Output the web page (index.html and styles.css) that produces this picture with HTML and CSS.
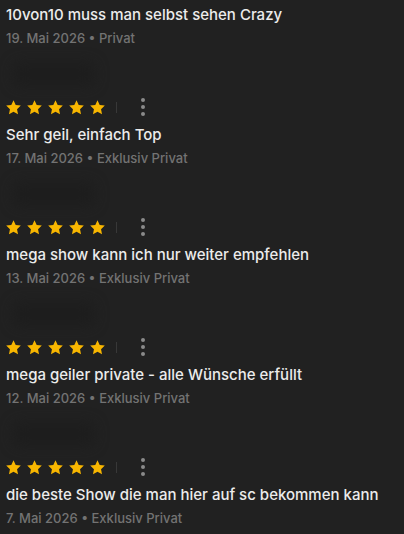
FILE: index.html
```html
<!DOCTYPE html>
<html lang="de">
<head>
    <title>Bewertungen</title>
    <link rel="stylesheet" href="styles.css">
</head>
<body>
    <div class="reviews">
        <!-- first review is scrolled past its header -->
        <div class="review first">
            <div class="review-text">10von10 muss man selbst sehen Crazy</div>
            <div class="review-meta">19. Mai 2026 • Privat</div>
        </div>

        <div class="review">
            <div class="reviewer"></div>
            <div class="rating-row">
                <div class="stars">
                    <svg viewBox="0 0 24 24"><path d="M12 1.8l3.1 6.6 7.2.9-5.3 5 1.4 7.1L12 17.9l-6.4 3.5 1.4-7.1-5.3-5 7.2-.9z"/></svg>
                    <svg viewBox="0 0 24 24"><path d="M12 1.8l3.1 6.6 7.2.9-5.3 5 1.4 7.1L12 17.9l-6.4 3.5 1.4-7.1-5.3-5 7.2-.9z"/></svg>
                    <svg viewBox="0 0 24 24"><path d="M12 1.8l3.1 6.6 7.2.9-5.3 5 1.4 7.1L12 17.9l-6.4 3.5 1.4-7.1-5.3-5 7.2-.9z"/></svg>
                    <svg viewBox="0 0 24 24"><path d="M12 1.8l3.1 6.6 7.2.9-5.3 5 1.4 7.1L12 17.9l-6.4 3.5 1.4-7.1-5.3-5 7.2-.9z"/></svg>
                    <svg viewBox="0 0 24 24"><path d="M12 1.8l3.1 6.6 7.2.9-5.3 5 1.4 7.1L12 17.9l-6.4 3.5 1.4-7.1-5.3-5 7.2-.9z"/></svg>
                </div>
                <span class="divider"></span>
                <button class="more" title="Mehr"><i></i><i></i><i></i></button>
            </div>
            <div class="review-text">Sehr geil, einfach Top</div>
            <div class="review-meta">17. Mai 2026 • Exklusiv Privat</div>
        </div>

        <div class="review">
            <div class="reviewer"></div>
            <div class="rating-row">
                <div class="stars">
                    <svg viewBox="0 0 24 24"><path d="M12 1.8l3.1 6.6 7.2.9-5.3 5 1.4 7.1L12 17.9l-6.4 3.5 1.4-7.1-5.3-5 7.2-.9z"/></svg>
                    <svg viewBox="0 0 24 24"><path d="M12 1.8l3.1 6.6 7.2.9-5.3 5 1.4 7.1L12 17.9l-6.4 3.5 1.4-7.1-5.3-5 7.2-.9z"/></svg>
                    <svg viewBox="0 0 24 24"><path d="M12 1.8l3.1 6.6 7.2.9-5.3 5 1.4 7.1L12 17.9l-6.4 3.5 1.4-7.1-5.3-5 7.2-.9z"/></svg>
                    <svg viewBox="0 0 24 24"><path d="M12 1.8l3.1 6.6 7.2.9-5.3 5 1.4 7.1L12 17.9l-6.4 3.5 1.4-7.1-5.3-5 7.2-.9z"/></svg>
                    <svg viewBox="0 0 24 24"><path d="M12 1.8l3.1 6.6 7.2.9-5.3 5 1.4 7.1L12 17.9l-6.4 3.5 1.4-7.1-5.3-5 7.2-.9z"/></svg>
                </div>
                <span class="divider"></span>
                <button class="more" title="Mehr"><i></i><i></i><i></i></button>
            </div>
            <div class="review-text">mega show kann ich nur weiter empfehlen</div>
            <div class="review-meta">13. Mai 2026 • Exklusiv Privat</div>
        </div>

        <div class="review">
            <div class="reviewer"></div>
            <div class="rating-row">
                <div class="stars">
                    <svg viewBox="0 0 24 24"><path d="M12 1.8l3.1 6.6 7.2.9-5.3 5 1.4 7.1L12 17.9l-6.4 3.5 1.4-7.1-5.3-5 7.2-.9z"/></svg>
                    <svg viewBox="0 0 24 24"><path d="M12 1.8l3.1 6.6 7.2.9-5.3 5 1.4 7.1L12 17.9l-6.4 3.5 1.4-7.1-5.3-5 7.2-.9z"/></svg>
                    <svg viewBox="0 0 24 24"><path d="M12 1.8l3.1 6.6 7.2.9-5.3 5 1.4 7.1L12 17.9l-6.4 3.5 1.4-7.1-5.3-5 7.2-.9z"/></svg>
                    <svg viewBox="0 0 24 24"><path d="M12 1.8l3.1 6.6 7.2.9-5.3 5 1.4 7.1L12 17.9l-6.4 3.5 1.4-7.1-5.3-5 7.2-.9z"/></svg>
                    <svg viewBox="0 0 24 24"><path d="M12 1.8l3.1 6.6 7.2.9-5.3 5 1.4 7.1L12 17.9l-6.4 3.5 1.4-7.1-5.3-5 7.2-.9z"/></svg>
                </div>
                <span class="divider"></span>
                <button class="more" title="Mehr"><i></i><i></i><i></i></button>
            </div>
            <div class="review-text">mega geiler private - alle Wünsche erfüllt</div>
            <div class="review-meta">12. Mai 2026 • Exklusiv Privat</div>
        </div>

        <div class="review">
            <div class="reviewer"></div>
            <div class="rating-row">
                <div class="stars">
                    <svg viewBox="0 0 24 24"><path d="M12 1.8l3.1 6.6 7.2.9-5.3 5 1.4 7.1L12 17.9l-6.4 3.5 1.4-7.1-5.3-5 7.2-.9z"/></svg>
                    <svg viewBox="0 0 24 24"><path d="M12 1.8l3.1 6.6 7.2.9-5.3 5 1.4 7.1L12 17.9l-6.4 3.5 1.4-7.1-5.3-5 7.2-.9z"/></svg>
                    <svg viewBox="0 0 24 24"><path d="M12 1.8l3.1 6.6 7.2.9-5.3 5 1.4 7.1L12 17.9l-6.4 3.5 1.4-7.1-5.3-5 7.2-.9z"/></svg>
                    <svg viewBox="0 0 24 24"><path d="M12 1.8l3.1 6.6 7.2.9-5.3 5 1.4 7.1L12 17.9l-6.4 3.5 1.4-7.1-5.3-5 7.2-.9z"/></svg>
                    <svg viewBox="0 0 24 24"><path d="M12 1.8l3.1 6.6 7.2.9-5.3 5 1.4 7.1L12 17.9l-6.4 3.5 1.4-7.1-5.3-5 7.2-.9z"/></svg>
                </div>
                <span class="divider"></span>
                <button class="more" title="Mehr"><i></i><i></i><i></i></button>
            </div>
            <div class="review-text">die beste Show die man hier auf sc bekommen kann</div>
            <div class="review-meta">7. Mai 2026 • Exklusiv Privat</div>
        </div>
    </div>
</body>
</html>
```

FILE: styles.css
```css
body {
    margin: 0;
    background: #212121;
    font-family: Inter, "Noto Sans", sans-serif;
    overflow: hidden;
}
.reviews {
    padding: 0 6px;
}
.review {
    padding-top: 16px;
}
.review.first {
    padding-top: 5px;
}
.reviewer {
    width: 80px;
    height: 22px;
    margin: 0 0 14px 8px;
    background: #1d1d1d;
    border-radius: 6px;
    filter: blur(7px);
}
.rating-row {
    display: flex;
    align-items: center;
    height: 16px;
    margin-bottom: 10px;
}
.stars {
    display: flex;
    gap: 4px;
    margin-left: -1px;
}
.stars svg {
    width: 17px;
    height: 17px;
    fill: #f8b600;
}
.divider {
    width: 1px;
    height: 11px;
    background: #383838;
    margin-left: 10px;
}
.more {
    display: flex;
    flex-direction: column;
    gap: 3px;
    background: none;
    border: none;
    padding: 0;
    margin-left: 24px;
    cursor: pointer;
}
.more i {
    width: 4px;
    height: 4px;
    border-radius: 50%;
    background: #8a8a8a;
}
.review-text {
    color: #ececec;
    font-size: 15px;
    line-height: 20px;
    font-weight: 500;
}
.review-meta {
    color: #737373;
    font-size: 13px;
    line-height: 18px;
    margin-top: 4px;
    font-weight: 500;
}
```
